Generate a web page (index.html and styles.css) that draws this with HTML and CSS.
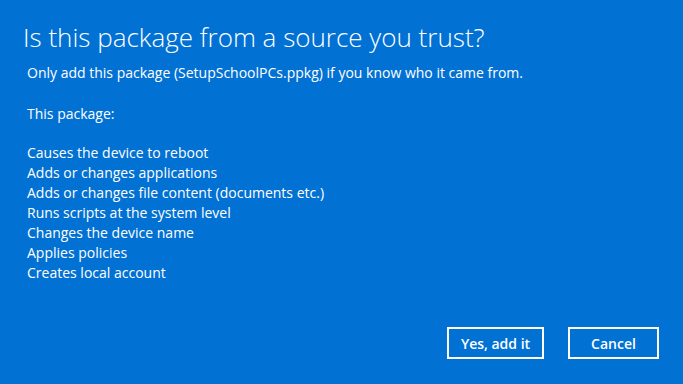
FILE: index.html
```html
<!DOCTYPE html>
<html lang="en">
<head>
  <meta charset="UTF-8" />
  <title>Is this package from a source you trust?</title>
  <link rel="stylesheet" href="styles.css">
</head>
<body>
  <div class="dialog">
    <h1 class="title">Is this package from a source you trust?</h1>
    <p class="lead">Only add this package (SetupSchoolPCs.ppkg) if you know who it came from.</p>

    <p class="intro">This package:</p>

    <!-- What the package does -->
    <ul class="actions">
      <li>Causes the device to reboot</li>
      <li>Adds or changes applications</li>
      <li>Adds or changes file content (documents etc.)</li>
      <li>Runs scripts at the system level</li>
      <li>Changes the device name</li>
      <li>Applies policies</li>
      <li>Creates local account</li>
    </ul>

    <div class="buttons">
      <button class="btn btn-yes">Yes, add it</button>
      <button class="btn btn-cancel">Cancel</button>
    </div>
  </div>
</body>
</html>
```

FILE: styles.css
```css
html, body {
  margin: 0;
  height: 100%;
}

body {
  background-color: #0271d4;
  color: #fff;
  font-family: "Open Sans", "Noto Sans", sans-serif;
}

/* Dialog */
.dialog {
  box-sizing: border-box;
  height: 384px;
  padding: 20px 24px 25px 27px;
  display: flex;
  flex-direction: column;
}

/* Heading */
.title {
  margin: 0 0 0 -4px;
  font-size: 26px;
  font-weight: 300;
  line-height: 34px;
}

.lead,
.intro {
  margin: 0;
  font-size: 14px;
  line-height: 20px;
}

.lead {
  margin-top: 9px;
}

.intro {
  margin-top: 21px;
}

/* List of actions */
.actions {
  list-style: none;
  margin: 19px 0 0;
  padding: 0;
  font-size: 14px;
  line-height: 20px;
}

/* Buttons */
.buttons {
  margin-top: auto;
  display: flex;
  justify-content: flex-end;
  gap: 24px;
}

.btn {
  height: 32px;
  border: 2px solid #fff;
  background-color: transparent;
  color: #fff;
  font-family: inherit;
  font-size: 14px;
  font-weight: 600;
  padding: 0;
  cursor: pointer;
}

.btn-yes {
  width: 97px;
}

.btn-cancel {
  width: 91px;
}
```
